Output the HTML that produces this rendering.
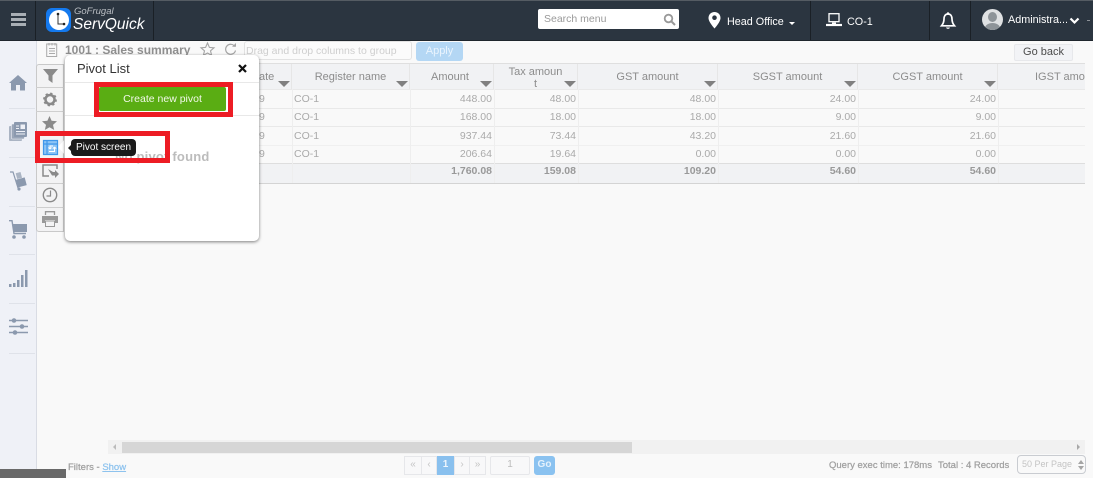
<!DOCTYPE html>
<html><head><meta charset="utf-8">
<style>
html,body{margin:0;padding:0}
body{width:1093px;height:478px;overflow:hidden;position:relative;background:#f9f9f9;font-family:"Liberation Sans",sans-serif;font-size:11px;color:#aaa}
.a{position:absolute;white-space:nowrap}
svg{position:absolute;overflow:visible}
.h{position:absolute;top:64px;height:25px;background:#f1f2f4;border-right:1px solid #e6e6e6;box-sizing:border-box;text-align:center;color:#8c8c8c;font-size:11px;line-height:26px;overflow:hidden;white-space:nowrap}
.c{position:absolute;font-size:10.5px;color:#aaa;line-height:14px;text-align:right;white-space:nowrap}
.l{position:absolute;font-size:10.5px;color:#aaa;line-height:14px;white-space:nowrap}
.f{font-weight:bold;color:#999}
.tri{position:absolute;top:81px;width:0;height:0;border-left:6px solid transparent;border-right:6px solid transparent;border-top:6px solid #808080}
.hl{position:absolute;left:108px;width:977px;height:1px;background:#e9e9e9}
.vl{position:absolute;top:89px;height:94px;width:1px;background:#eeeeee}
.sep{position:absolute;left:9px;width:26px;height:1px;background:#dfe2e9}
.tb{position:absolute;left:36px;width:28px;height:1px;background:#cfcfcf}
.pg{position:absolute;top:456px;height:19px;box-sizing:border-box;border:1px solid #e6e7ea;background:#f8f8f9;text-align:center;line-height:16px;color:#c4c4c4;font-size:10px}
.ft{position:absolute;white-space:nowrap;font-size:9.5px;color:#a0a0a0;-webkit-text-stroke:.25px #a0a0a0}
</style></head><body>

<!-- topbar -->
<div class="a" style="left:0;top:0;width:1093px;height:41px;background:#2b3540;border-top:1px solid #555c63;box-sizing:border-box;border-bottom:1px solid #1f262d"></div>
<div class="a" style="left:35px;top:1px;width:1px;height:39px;background:#1a2026"></div>
<div class="a" style="left:153px;top:1px;width:1px;height:39px;background:#1a2026"></div>
<div class="a" style="left:810px;top:1px;width:1px;height:39px;background:#1a2026"></div>
<div class="a" style="left:929px;top:1px;width:1px;height:39px;background:#1a2026"></div>
<div class="a" style="left:970px;top:1px;width:1px;height:39px;background:#1a2026"></div>
<div class="a" style="left:11px;top:13px;width:15px;height:3px;background:#a9afb5"></div>
<div class="a" style="left:11px;top:18px;width:15px;height:3px;background:#a9afb5"></div>
<div class="a" style="left:11px;top:23px;width:15px;height:3px;background:#a9afb5"></div>

<!-- logo -->
<div class="a" style="left:46px;top:8px;width:25px;height:24px;border-radius:6px;background:#1479ee"></div>
<div class="a" style="left:49px;top:10px;width:20px;height:20px;border-radius:50%;background:#fff"></div>
<svg style="left:46px;top:8px" width="25" height="24"><path d="M12 6V16H18" fill="none" stroke="#333" stroke-width="1"/><circle cx="12" cy="6" r="1.3" fill="#222"/><circle cx="18" cy="16" r="1.3" fill="#222"/></svg>
<div class="a" style="left:74px;top:6px;font-size:9.5px;font-style:italic;color:#b9bdc2;line-height:12px">GoFrugal</div>
<div class="a" style="left:73px;top:15px;font-size:15.5px;font-style:italic;color:#fff;line-height:19px">ServQuick</div>

<!-- search -->
<div class="a" style="left:538px;top:9px;width:141px;height:20px;background:#fff;border-radius:2px"></div>
<div class="a" style="left:544px;top:13px;font-size:10.5px;color:#9a9a9a">Search menu</div>
<svg style="left:663px;top:13px" width="13" height="13"><circle cx="5.5" cy="5.5" r="3.8" fill="none" stroke="#999" stroke-width="1.8"/><path d="M8.5 8.5L12 12" stroke="#999" stroke-width="2"/></svg>

<!-- location -->
<svg style="left:708px;top:12px" width="13" height="17"><path d="M6.5 0C3 0 .5 2.6 .5 6C.5 10 6.5 16.5 6.5 16.5S12.5 10 12.5 6C12.5 2.6 10 0 6.5 0Z" fill="#fff"/><circle cx="6.5" cy="5.7" r="2.3" fill="#2b3540"/></svg>
<div class="a" style="left:727px;top:16px;font-size:10.8px;color:#fff">Head Office</div>
<div class="a" style="left:789px;top:22px;border-left:3.5px solid transparent;border-right:3.5px solid transparent;border-top:3.5px solid #fff"></div>

<!-- computer -->
<svg style="left:826px;top:13px" width="16" height="14"><rect x="3" y=".7" width="10" height="8" fill="none" stroke="#fff" stroke-width="1.3"/><path d="M6 9.500H10V11H6Z" fill="#fff"/><path d="M0 12H16" stroke="#fff" stroke-width="2.200"/></svg>
<div class="a" style="left:847px;top:16px;font-size:10.8px;color:#fff">CO-1</div>

<!-- bell -->
<svg style="left:940px;top:12px" width="16" height="18"><path d="M8 2C5 2 4 4.500 4 7C4 10.500 3 12 1.500 13.800H14.500C13 12 12 10.500 12 7C12 4.500 11 2 8 2Z" fill="none" stroke="#fff" stroke-width="1.700"/><path d="M6 15.500C6.500 17.300 9.500 17.300 10 15.500Z" fill="#fff"/><circle cx="8" cy="1.500" r="1.200" fill="#fff"/></svg>

<!-- user -->
<div class="a" style="left:982px;top:9px;width:21px;height:21px;border-radius:50%;background:#dfe1e3;overflow:hidden">
  <div class="a" style="left:6px;top:3px;width:9px;height:10px;border-radius:50%;background:#8e9499"></div>
  <div class="a" style="left:3px;top:14px;width:15px;height:10px;border-radius:50%;background:#8e9499"></div>
</div>
<div class="a" style="left:1008px;top:14px;font-size:10.8px;color:#fff">Administra...</div>
<svg style="left:1069px;top:17px" width="11" height="8"><path d="M1.500 1.500L5.500 5.500L9.500 1.500" fill="none" stroke="#fff" stroke-width="2.200"/></svg>
<div class="a" style="left:1087px;top:20px;width:3px;height:1px;background:#8c9197"></div>

<!-- left sidebar -->
<div class="a" style="left:0;top:41px;width:36px;height:437px;background:#eff1f7;border-right:1px solid #d9dce4"></div>
<svg style="left:9px;top:75px" width="18" height="16"><path d="M0 8L9 0L18 8L16 8V15.500H11V10H7V15.500H2V8Z" fill="#8b99ae"/></svg>
<div class="sep" style="top:108px"></div>
<svg style="left:9px;top:122px" width="18" height="19"><rect x="0" y="4" width="13" height="15" rx="1" fill="#aab4c3"/><rect x="2.500" y="2" width="13" height="15" rx="1" fill="#9aa6b8" stroke="#eff1f7" stroke-width=".6"/><rect x="5" y="0" width="13" height="15" rx="1" fill="#8b99ae"/><rect x="11.500" y="2.500" width="4.500" height="4.500" fill="#eff1f7"/><path d="M7 4H10M7 6.500H10M7 9.500H16M7 12H16" stroke="#eff1f7"/></svg>
<div class="sep" style="top:157px"></div>
<svg style="left:10px;top:171px" width="17" height="20"><path d="M0 1H3L8 17" fill="none" stroke="#8b99ae" stroke-width="1.200"/><circle cx="9" cy="18" r="1.600" fill="#8b99ae"/><rect x="6.500" y="1.500" width="5" height="6" fill="#aab4c3" transform="rotate(-15 9 5)"/><rect x="7" y="7.500" width="9" height="8" fill="#8b99ae" transform="rotate(-15 11 12)"/></svg>
<div class="sep" style="top:206px"></div>
<svg style="left:9px;top:220px" width="18" height="19"><path d="M4 4H18V12H5Z" fill="#8b99ae"/><path d="M0 .7H3L5 13.500H17" fill="none" stroke="#8b99ae" stroke-width="1.400"/><circle cx="5" cy="17" r="1.800" fill="#8b99ae"/><circle cx="15" cy="17" r="1.800" fill="#8b99ae"/></svg>
<div class="sep" style="top:254px"></div>
<svg style="left:9px;top:270px" width="19" height="17"><rect x="0" y="14" width="2.500" height="3" fill="#8b99ae"/><rect x="4" y="13" width="2.500" height="4" fill="#8b99ae"/><rect x="8" y="10" width="2.500" height="7" fill="#8b99ae"/><rect x="12" y="5" width="2.500" height="12" fill="#8b99ae"/><rect x="16" y="0" width="2.500" height="17" fill="#8b99ae"/></svg>
<div class="sep" style="top:303px"></div>
<svg style="left:9px;top:318px" width="19" height="17"><path d="M0 2.500H19M0 8.500H19M0 14.500H19" stroke="#8b99ae" stroke-width="1.500"/><circle cx="5" cy="2.500" r="2.300" fill="#8b99ae"/><circle cx="13" cy="8.500" r="2.300" fill="#8b99ae"/><circle cx="6" cy="14.500" r="2.300" fill="#8b99ae"/></svg>
<div class="sep" style="top:353px"></div>

<!-- toolbar row -->
<svg style="left:46px;top:42px" width="12" height="15"><rect x=".7" y="2" width="10" height="12.500" fill="none" stroke="#aaa"/><path d="M3 1V3.500M6 1V3.500M9 1V3.500M3 6.500H9M3 9H9M3 11.500H9" stroke="#aaa"/></svg>
<div class="a" style="left:65px;top:43px;font-size:12px;font-weight:bold;color:#8f8f8f">1001 : Sales summary</div>
<svg style="left:200px;top:42px" width="15" height="14"><path d="M7.500 1L9.400 5.400L14 5.800L10.500 8.800L11.600 13.300L7.500 11L3.400 13.300L4.500 8.800L1 5.800L5.600 5.400Z" fill="none" stroke="#a5a5a5" stroke-width="1.100"/></svg>
<svg style="left:224px;top:43px" width="13" height="13"><path d="M10.800 3.500A5 5 0 1 0 11.500 7.500" fill="none" stroke="#a5a5a5" stroke-width="1.200"/><path d="M8 3.800H12V0Z" fill="#a5a5a5"/></svg>
<div class="a" style="left:244px;top:41px;width:168px;height:19px;box-sizing:border-box;background:#fbfbfb;border:1px solid #e2e2e2;border-radius:3px;padding:3px 1px;font-size:10.5px;color:#cfcfcf">Drag and drop columns to group</div>
<div class="a" style="left:416px;top:42px;width:47px;height:19px;background:#b4d7f4;border-radius:3px;text-align:center;line-height:18px;font-size:11px;color:#eaf4fd">Apply</div>
<div class="a" style="left:1014px;top:44px;width:59px;height:17px;background:#f2f3f6;border:1px solid #e7e8eb;box-sizing:border-box;border-radius:2px;text-align:center;line-height:15px;font-size:11px;color:#4c4c4c">Go back</div>

<!-- grid -->
<div class="a" style="left:108px;top:63px;width:977px;height:1px;background:#dfdfdf"></div>
<div class="h" style="left:108px;width:184px"></div>
<div class="a" style="left:259px;top:71px;font-size:11px;color:#8c8c8c">ate</div>
<div class="h" style="left:292px;width:118px">Register name</div>
<div class="h" style="left:410px;width:84px;padding-right:3px">Amount</div>
<div class="h" style="left:494px;width:84px;line-height:12px;padding:2px 8px 0 8px">Tax amoun<br>t</div>
<div class="h" style="left:578px;width:140px">GST amount</div>
<div class="h" style="left:718px;width:140px">SGST amount</div>
<div class="h" style="left:858px;width:140px">CGST amount</div>
<div class="h" style="left:998px;width:87px;border-right:0;text-align:left;padding-left:37px">IGST amount</div>
<div class="tri" style="left:278px"></div>
<div class="tri" style="left:396px"></div>
<div class="tri" style="left:480px"></div>
<div class="tri" style="left:564px"></div>
<div class="tri" style="left:704px"></div>
<div class="tri" style="left:844px"></div>
<div class="tri" style="left:984px"></div>

<div class="a" style="left:108px;top:164px;width:977px;height:19px;background:#f1f2f4"></div>
<div class="hl" style="top:89px"></div><div class="hl" style="top:108px"></div><div class="hl" style="top:126px"></div><div class="hl" style="top:145px;background:#f0f0f0"></div><div class="hl" style="top:163px;background:#dedede"></div><div class="hl" style="top:183px;background:#d4d4d4"></div>
<div class="vl" style="left:292px"></div><div class="vl" style="left:410px"></div><div class="vl" style="left:494px"></div><div class="vl" style="left:578px"></div><div class="vl" style="left:718px"></div><div class="vl" style="left:858px"></div><div class="vl" style="left:998px"></div>

<div class="l" style="left:259px;top:92px">9</div>
<div class="l" style="left:259px;top:110px">9</div>
<div class="l" style="left:259px;top:129px">9</div>
<div class="l" style="left:259px;top:147px">9</div>

<div class="l" style="left:294px;top:92px">CO-1</div>
<div class="l" style="left:294px;top:110px">CO-1</div>
<div class="l" style="left:294px;top:129px">CO-1</div>
<div class="l" style="left:294px;top:147px">CO-1</div>

<div class="c" style="right:601px;top:92px">448.00</div><div class="c" style="right:601px;top:110px">168.00</div><div class="c" style="right:601px;top:129px">937.44</div><div class="c" style="right:601px;top:147px">206.64</div><div class="c f" style="right:601px;top:164px">1,760.08</div>
<div class="c" style="right:517px;top:92px">48.00</div><div class="c" style="right:517px;top:110px">18.00</div><div class="c" style="right:517px;top:129px">73.44</div><div class="c" style="right:517px;top:147px">19.64</div><div class="c f" style="right:517px;top:164px">159.08</div>
<div class="c" style="right:377px;top:92px">48.00</div><div class="c" style="right:377px;top:110px">18.00</div><div class="c" style="right:377px;top:129px">43.20</div><div class="c" style="right:377px;top:147px">0.00</div><div class="c f" style="right:377px;top:164px">109.20</div>
<div class="c" style="right:237px;top:92px">24.00</div><div class="c" style="right:237px;top:110px">9.00</div><div class="c" style="right:237px;top:129px">21.60</div><div class="c" style="right:237px;top:147px">0.00</div><div class="c f" style="right:237px;top:164px">54.60</div>
<div class="c" style="right:97px;top:92px">24.00</div><div class="c" style="right:97px;top:110px">9.00</div><div class="c" style="right:97px;top:129px">21.60</div><div class="c" style="right:97px;top:147px">0.00</div><div class="c f" style="right:97px;top:164px">54.60</div>

<!-- tool strip -->
<div class="a" style="left:36px;top:64px;width:28px;height:168px;background:#f3f3f4;border:1px solid #c9c9c9;box-sizing:border-box;border-radius:3px 0 0 3px"></div>
<div class="tb" style="top:87px"></div><div class="tb" style="top:111px"></div><div class="tb" style="top:183px"></div><div class="tb" style="top:207px"></div>
<svg style="left:43px;top:69px" width="15" height="14"><path d="M0 0H15L9.500 6.500V14L5.500 11V6.500Z" fill="#8a8a8a"/></svg>
<svg style="left:43px;top:92px" width="14" height="15"><circle cx="7" cy="7.500" r="4.500" fill="none" stroke="#8a8a8a" stroke-width="2.500"/><circle cx="7" cy="7.500" r="6" fill="none" stroke="#8a8a8a" stroke-width="1.800" stroke-dasharray="2.300 2.400"/></svg>
<svg style="left:42px;top:116px" width="15" height="14"><path d="M7.500 0L9.600 4.800L15 5.300L11 8.900L12.200 14L7.500 11.300L2.800 14L4 8.900L0 5.300L5.400 4.800Z" fill="#8a8a8a"/></svg>
<div class="a" style="left:58px;top:139px;border-top:8px solid transparent;border-bottom:8px solid transparent;border-right:7px solid #fff"></div>
<svg style="left:43px;top:140px" width="15" height="15"><rect x="0" y="0" width="15" height="15" fill="#8cc4f5"/><path d="M.5 .5H14.500V14.500H.5ZM.5 4H14.500M4 .5V14.500" fill="none" stroke="#3f97ea" stroke-width="1.200"/><path d="M6 11.500H11.500V7M11.500 7L9.800 8.700M11.500 7L13.200 8.700M10 6H7V9M7 9L5.500 7.500M7 9L8.500 7.500" fill="none" stroke="#fff" stroke-width="1"/></svg>
<svg style="left:42px;top:164px" width="17" height="15"><path d="M7 12H1V1H15V5" fill="none" stroke="#8a8a8a" stroke-width="1.500"/><path d="M6 5L11 8H13V6L17 10L13 14V11.500H10Z" fill="#8a8a8a"/></svg>
<svg style="left:42px;top:187px" width="16" height="16"><circle cx="8" cy="8" r="6.700" fill="none" stroke="#8a8a8a" stroke-width="1.400"/><path d="M8.500 3.500V9H4.500" fill="none" stroke="#8a8a8a" stroke-width="1.200"/></svg>
<svg style="left:42px;top:211px" width="16" height="16"><path d="M3.500 4V.7H12.500V4" fill="none" stroke="#999" stroke-width="1.300"/><path d="M0 5H16V12H13V9H3V12H0Z" fill="#999"/><path d="M3.500 10H12.500V15.500H3.500Z" fill="none" stroke="#999"/></svg>

<!-- popover -->
<div class="a" style="left:65px;top:55px;width:194px;height:186px;background:#fff;border-radius:5px;box-shadow:0 1px 3px rgba(0,0,0,.5)"></div>
<div class="a" style="left:77px;top:61px;font-size:13px;line-height:15px;color:#333">Pivot List</div>
<svg style="left:238px;top:64px" width="9" height="9"><path d="M1 1L8 8M8 1L1 8" stroke="#111" stroke-width="2.200"/></svg>
<div class="a" style="left:65px;top:82px;width:194px;height:1px;background:#e8e8e8"></div>
<div class="a" style="left:65px;top:115px;width:194px;height:1px;background:#e8e8e8"></div>
<div class="a" style="left:115px;top:149px;font-size:13px;font-weight:bold;color:#bcbcbc;letter-spacing:.2px">No pivot found</div>
<div class="a" style="left:99px;top:87px;width:127px;height:24px;background:#5aad13;border-radius:2px;text-align:center;line-height:24px;font-size:10.5px;color:#f2f8ea">Create new pivot</div>

<!-- red boxes -->
<div class="a" style="left:94px;top:82px;width:139px;height:35px;box-sizing:border-box;border:5px solid #ed1c24"></div>
<div class="a" style="left:35px;top:131px;width:135px;height:32px;box-sizing:border-box;border:5px solid #ed1c24"></div>

<!-- tooltip -->
<div class="a" style="left:71px;top:139px;width:65px;height:17px;background:#1a1a1a;border-radius:4px;text-align:center;line-height:18px;font-size:10px;color:#fff">Pivot screen</div>
<div class="a" style="left:68px;top:144px;border-top:4px solid transparent;border-bottom:4px solid transparent;border-right:4px solid #1a1a1a"></div>

<!-- scrollbar -->
<div class="a" style="left:108px;top:440px;width:977px;height:14px;background:#f1f1f1"></div>
<div class="a" style="left:122px;top:442px;width:510px;height:11px;background:#d6d6d6"></div>
<div class="a" style="left:113px;top:444px;border-top:3px solid transparent;border-bottom:3px solid transparent;border-right:3px solid #bbb"></div>
<div class="a" style="left:1077px;top:444px;border-top:3px solid transparent;border-bottom:3px solid transparent;border-left:3px solid #a8a8a8"></div>

<!-- footer -->
<div class="ft" style="left:68px;top:462px">Filters - <span style="color:#8ec3ee;-webkit-text-stroke:.25px #8ec3ee;text-decoration:underline">Show</span></div>
<div class="a" style="left:0;top:469px;width:66px;height:9px;background:#696969"></div>
<div class="pg" style="left:404px;width:18px">«</div>
<div class="pg" style="left:421px;width:16px">‹</div>
<div class="pg" style="left:437px;width:17px;background:#89c0ee;border-color:#89c0ee;color:#eef6fd;font-weight:bold">1</div>
<div class="pg" style="left:454px;width:16px">›</div>
<div class="pg" style="left:469px;width:17px">»</div>
<div class="pg" style="left:490px;width:40px;border-radius:2px;color:#bbb">1</div>
<div class="pg" style="left:534px;width:21px;background:#8ac2f0;border-color:#8ac2f0;color:#e4f1fc;border-radius:3px;font-weight:bold;line-height:15px">Go</div>
<div class="ft" style="left:829px;top:460px">Query exec time: 178ms</div>
<div class="ft" style="left:938px;top:460px">Total : 4 Records</div>
<div class="a" style="left:1017px;top:455px;width:69px;height:19px;box-sizing:border-box;border:1px solid #c9ccd1;border-radius:4px;font-size:9px;line-height:17px;padding-left:4px;color:#c4c4c4">50 Per Page</div>
<div class="a" style="left:1078px;top:460px;border-left:3px solid transparent;border-right:3px solid transparent;border-bottom:4px solid #a5a5a5"></div>
<div class="a" style="left:1078px;top:466px;border-left:3px solid transparent;border-right:3px solid transparent;border-top:4px solid #a5a5a5"></div>
</body></html>
